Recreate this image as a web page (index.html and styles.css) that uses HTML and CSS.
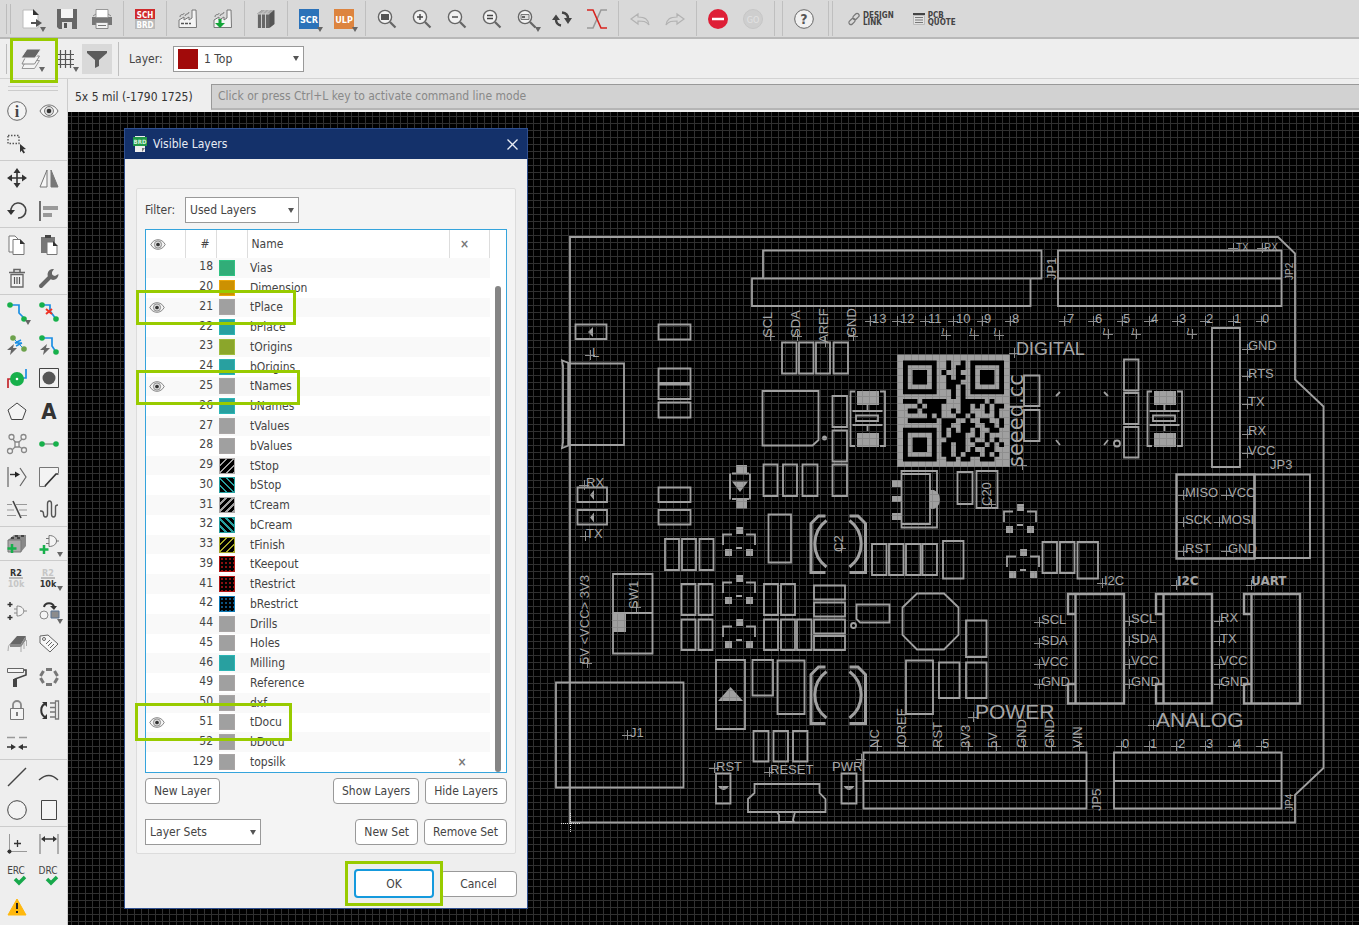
FILE: index.html
```html
<!DOCTYPE html>
<html lang="en">
<head>
<meta charset="utf-8">
<title>Board editor - Visible Layers</title>
<link rel="stylesheet" href="styles.css">
</head>
<body>
<svg class="defs" width="0" height="0" aria-hidden="true">
  <defs>
    <symbol id="eye" viewBox="0 0 20 16"><path d="M1 8C5 0 15 0 19 8C15 16 5 16 1 8Z" fill="#f6f6f6" stroke="#6a6a6a"/><circle cx="10" cy="8" r="4.5" fill="#ddd" stroke="#777"/><circle cx="10" cy="8" r="2.3" fill="#333"/></symbol>
    <symbol id="lens" viewBox="0 0 20 20"><circle cx="8" cy="8" r="6.6" fill="#f2f2f2" stroke="#666" stroke-width="1.4"/><path d="M13 13l5.500 5.500" stroke="#666" stroke-width="2.200"/></symbol>
    <symbol id="factory" viewBox="0 0 20 20"><path d="M1 18.500V11l5-3v3l5-3v3l3-2V1h4l.5 17.500z" fill="#f4f4f4" stroke="#777"/><path d="M2 8c0-4 4-1 4-4M7 7c0-3 4-1 4-4" fill="none" stroke="#777"/></symbol>
  </defs>
</svg>

<header class="toolbar" role="toolbar" aria-label="Main">
  <span class="grip"></span>
  <button class="tool drop" aria-label="Open"><svg width="20" height="20" viewBox="0 0 20 20"><path d="M1 1h10l5 5v13H1z" fill="#fff" stroke="#bbb"/><path d="M11 0l6 6h-6z" fill="#333"/><path d="M9 14h8" stroke="#555" stroke-width="2"/><path d="M14 10l6 4-6 4z" fill="#555"/></svg></button>
  <button class="tool" aria-label="Save"><svg width="20" height="20" viewBox="0 0 20 20"><path d="M0 0h20v20H2l-2-2z" fill="#666"/><path d="M4 0h12v9H4z" fill="#f4f4f4"/><path d="M5 13h10v7H5z" fill="#ddd"/><path d="M7 14h3v5H7z" fill="#555"/></svg></button>
  <button class="tool" aria-label="Print"><svg width="20" height="20" viewBox="0 0 20 20"><path d="M0 8h20v8H0z" fill="#777"/><path d="M4 .5h12v8H4z" fill="#fff" stroke="#999"/><path d="M4 13.500h12v6H4z" fill="#f2f2f2" stroke="#888"/><path d="M6 16.500h8" stroke="#777"/><path d="M1 7l3-2M19 7l-3-2" stroke="#888"/></svg></button>
  <span class="sep"></span>
  <button class="tool" aria-label="Switch to schematic"><svg width="20" height="20" viewBox="0 0 20 20"><path d="M0 0h20v10H0z" fill="#cf2a2c"/><path d="M0 10h20v10H0z" fill="#b9b9b9"/><text x="10" y="8.800" class="ic sm" fill="#fff">SCH</text><text x="10" y="18.800" class="ic sm" fill="#fff">BRD</text></svg></button>
  <span class="sep"></span>
  <button class="tool" aria-label="CAM processor"><svg width="20" height="20"><use href="#factory"/><path d="M3 14.500h10" stroke="#555" stroke-width="1.500" stroke-dasharray="3 1"/></svg></button>
  <button class="tool" aria-label="Generate CAM data"><svg width="20" height="20"><use href="#factory"/><path d="M7 10v6" stroke="#13a538" stroke-width="3"/><path d="M2 14h10l-5 5z" fill="#13a538"/></svg></button>
  <span class="sep"></span>
  <button class="tool" aria-label="Library manager"><svg width="20" height="20" viewBox="0 0 20 20"><path d="M1 5l5-4h12v14l-5 4H1z" fill="#666"/><path d="M1 5l5-4h12l-4 4z" fill="#aaa"/><path d="M1.500 5v14M5.500 5v14M9.500 5v14M5.500 5l4-4M9.500 5l4-4M1.500 5h12" fill="none" stroke="#ccc"/><path d="M13.500 5v14l5-4V1z" fill="#555"/></svg></button>
  <span class="sep"></span>
  <button class="tool drop" aria-label="Run script"><svg width="20" height="20"><path d="M0 0h20v20H0z" fill="#2b72b9"/><text x="10" y="13.500" class="ic" fill="#fff">SCR</text></svg></button>
  <button class="tool drop" aria-label="Run ULP"><svg width="20" height="20"><path d="M0 0h20v20H0z" fill="#dd843f"/><text x="10" y="13.500" class="ic" fill="#fff">ULP</text></svg></button>
  <span class="sep"></span>
  <button class="tool" aria-label="Zoom to fit"><svg width="20" height="20"><use href="#lens"/><path d="M4 5h8v6H4z" fill="#555"/></svg></button>
  <button class="tool" aria-label="Zoom in"><svg width="20" height="20"><use href="#lens"/><path d="M5 8h6M8 5v6" stroke="#444" stroke-width="1.400"/></svg></button>
  <button class="tool" aria-label="Zoom out"><svg width="20" height="20"><use href="#lens"/><path d="M5 8h6" stroke="#444" stroke-width="1.400"/></svg></button>
  <button class="tool" aria-label="Redraw"><svg width="20" height="20"><use href="#lens"/><path d="M5 6.500h6M5 9.500h6" stroke="#444" stroke-width="1.400"/></svg></button>
  <button class="tool drop" aria-label="Zoom select"><svg width="20" height="20"><use href="#lens"/><path d="M4 5.500h8v5H4z" fill="#ddd" stroke="#777"/><path d="M5 7h3v2H5z" fill="#666"/></svg></button>
  <button class="tool" aria-label="Refresh"><svg width="20" height="20" viewBox="0 0 20 20"><path d="M4 10.500c0 3 2 5.500 5 6M16 9.500c0-3-2-5.500-6-6" fill="none" stroke="#444" stroke-width="2.400"/><path d="M4 5.500l5-2.500v3zM11 14l4 2-4 2z" fill="none"/><path d="M0 11h8L4 5.500zM12 9h8l-4 6z" fill="#444"/></svg></button>
  <button class="tool" aria-label="Cross probe"><svg width="20" height="20" viewBox="0 0 20 20"><path d="M20 1h-6L6 19H0" fill="none" stroke="#999" stroke-width="1.600"/><path d="M0 1h6l8 18h6" fill="none" stroke="#d8241f" stroke-width="1.600"/></svg></button>
  <span class="sep"></span>
  <button class="tool" aria-label="Undo" disabled><svg width="20" height="20" viewBox="0 0 20 20"><path d="M1 10l7-5v3c7 0 10 2 11 8-3-4-6-4-11-4v3z" fill="none" stroke="#b2b2b2" stroke-width="1.200"/></svg></button>
  <button class="tool" aria-label="Redo" disabled><svg width="20" height="20" viewBox="0 0 20 20"><path d="M19 10l-7-5v3C5 8 2 10 1 16c3-4 6-4 11-4v3z" fill="none" stroke="#b2b2b2" stroke-width="1.200"/></svg></button>
  <span class="sep"></span>
  <button class="tool" aria-label="Stop"><svg width="20" height="20"><circle cx="10" cy="10" r="10" fill="#de1f37"/><path d="M4 10h12" stroke="#fff" stroke-width="2.500"/></svg></button>
  <button class="tool" aria-label="Go" disabled><svg width="20" height="20"><circle cx="10" cy="10" r="9.500" fill="#cecece" stroke="#c6c6c6"/><text x="10" y="13.500" class="ic thin" fill="#e2e2e2">GO</text></svg></button>
  <span class="sep"></span><span class="sep"></span>
  <button class="tool" aria-label="Help"><svg width="20" height="20"><circle cx="10" cy="10" r="9.300" fill="#f1f1f1" stroke="#666"/><text x="10" y="15" class="ic q" fill="#555">?</text></svg></button>
  <span class="sep slim"></span><span class="sep slim"></span>
  <button class="link-tool"><svg width="12" height="14" viewBox="0 0 12 14"><g fill="none" stroke="#777" stroke-width="1.200"><rect x="6" y="1" width="4" height="7" rx="2" transform="rotate(45 8 4.500)"/><rect x="2" y="6" width="4" height="7" rx="2" transform="rotate(45 4 9.500)"/></g></svg><span>DESIGN<br>LINK</span></button>
  <button class="link-tool"><svg width="12" height="14" viewBox="0 0 12 14"><path d="M0 1h12v2H0z" fill="#444"/><path d="M.5 3.500h11v9H.5z" fill="#e2e2e2" stroke="#bbb"/><path d="M2 5.500h8M2 8h8M2 10.500h8" stroke="#777"/></svg><span>PCB<br>QUOTE</span></button>
</header>

<div class="params">
  <span class="grip one"></span>
  <button class="tool drop" aria-label="Layer settings"><svg width="20" height="22" viewBox="0 0 20 22"><path d="M5 12.500h13.500l-5 8H1z" fill="#f4f4f4" stroke="#999"/><path d="M5 8h13.500l-5 8H1z" fill="#f4f4f4" stroke="#888"/><path d="M6 1h14l-6 9H0z" fill="#666" stroke="#eee"/></svg></button>
  <button class="tool drop" aria-label="Grid"><svg width="18" height="20" viewBox="0 0 18 20"><path d="M4.500 1v18M9.500 1v18M14.500 1v18M0 5.500h18M0 10.500h18M0 15.500h18" stroke="#555" stroke-width="1.200"/></svg></button>
  <button class="tool on" aria-label="Selection filter"><svg width="20" height="18" viewBox="0 0 20 18"><path d="M0 1h20v2l-8 7v6l-4 2v-8L0 3z" fill="#5c5c5c"/></svg></button>
  <span class="sep tall"></span>
  <label for="layer">Layer:</label>
  <span class="combo layer"><i class="red"></i><select id="layer"><option>1 Top</option></select></span>
</div>

<div class="work">
  <nav class="palette" aria-label="Commands">
    <span class="rail"></span>
    <div class="group">
      <button class="cmd" aria-label="Info"><svg width="20" height="20"><circle cx="10" cy="10" r="9.300" fill="#f3f3f3" stroke="#666"/><text x="10" y="15.500" class="ic serif" fill="#444">i</text></svg></button>
      <button class="cmd" aria-label="Show"><svg width="20" height="16"><use href="#eye"/></svg></button>
      <button class="cmd" aria-label="Select group"><svg width="20" height="20"><path d="M1 1.500h11v8H1z" fill="none" stroke="#555" stroke-width="1.400" stroke-dasharray="1.500 1.500"/><path d="M13 10l6 5-3 .5 2 3-1.500 1-2-3-1.500 2z" fill="#333"/></svg></button>
    </div>
    <div class="group">
      <button class="cmd" aria-label="Move"><svg width="20" height="20"><path d="M10 3v14M3 10h14" stroke="#333" stroke-width="1.600"/><path d="M10 0l3.500 5h-7zM10 20l3.500-5h-7zM0 10l5-3.500v7zM20 10l-5-3.500v7z" fill="#333"/></svg></button>
      <button class="cmd" aria-label="Mirror"><svg width="20" height="20"><path d="M8 2v17H1z" fill="#f6f6f6" stroke="#777"/><path d="M12 2v17h7z" fill="#777" stroke="#777"/></svg></button>
      <button class="cmd" aria-label="Rotate"><svg width="20" height="20"><path d="M4 11A7.500 7.500 0 1 1 11 17" fill="none" stroke="#444" stroke-width="1.600"/><path d="M0 9h8l-4 5z" fill="#333"/></svg></button>
      <button class="cmd" aria-label="Align"><svg width="20" height="20"><path d="M1 0v20" stroke="#444" stroke-width="1.500"/><path d="M4 5h15v4H4zM4 12h9v4H4z" fill="#999"/></svg></button>
    </div>
    <div class="group">
      <button class="cmd" aria-label="Copy"><svg width="20" height="20"><path d="M2 1h6l4 4v12H2z" fill="#fff" stroke="#777"/><path d="M6 4.500h7l4 4v11H6z" fill="#fff" stroke="#777"/><path d="M13 4l5 5h-5z" fill="#333"/></svg></button>
      <button class="cmd" aria-label="Paste"><svg width="20" height="20"><path d="M2 2h14v16H2z" fill="#777"/><path d="M6 0h6v3H6z" fill="#444"/><path d="M8 7h6l4 4v8.500H8z" fill="#fff" stroke="#777"/><path d="M14 6l5 5h-5z" fill="#333"/></svg></button>
      <button class="cmd" aria-label="Delete"><svg width="20" height="20"><path d="M4 6.500h12V19H4z" fill="#f4f4f4" stroke="#666" stroke-width="1.300"/><path d="M2 4.500h16M7 4V1.500h6V4" fill="none" stroke="#666" stroke-width="1.600"/><path d="M7.500 9v7M10 9v7M12.500 9v7" stroke="#555" stroke-width="1.200"/></svg></button>
      <button class="cmd" aria-label="Change"><svg width="20" height="20"><path d="M2 18L12 8" stroke="#666" stroke-width="4" stroke-linecap="round"/><path d="M15 1a5.500 5.500 0 1 0 4.500 5l-3.500 2-3-1v-3z" fill="#666"/></svg></button>
    </div>
    <div class="group">
      <button class="cmd drop" aria-label="Route"><svg width="20" height="20"><path d="M3 3h9v8l6 6" fill="none" stroke="#1b8fe3" stroke-width="1.700"/><g fill="#17b04b"><circle cx="3" cy="3" r="2.800"/><circle cx="17" cy="17" r="2.800"/></g></svg></button>
      <button class="cmd" aria-label="Ripup"><svg width="20" height="20"><path d="M3 3h8v6l6 8" fill="none" stroke="#1b8fe3" stroke-width="1.700"/><path d="M7 7l6 5M13 7l-6 5" stroke="#ee3326" stroke-width="2"/><g fill="#17b04b"><circle cx="3" cy="3" r="2.800"/><circle cx="17" cy="17" r="2.800"/></g></svg></button>
      <button class="cmd" aria-label="Quick route airwire"><svg width="20" height="20"><path d="M6 3l11 11" stroke="#1b8fe3"/><path d="M8 8l6-3M9 11l6-3M8 8l7 0" fill="none" stroke="#1b8fe3" stroke-width="1.500"/><g fill="#6da24c"><circle cx="6" cy="3" r="2.800"/><circle cx="17" cy="14" r="2.800"/></g><path d="M7 9l-7 6h4l-1 5 7-7H6z" fill="#666"/></svg></button>
      <button class="cmd" aria-label="Quick route"><svg width="20" height="20"><path d="M3 3h10v8l4 6" fill="none" stroke="#1b8fe3" stroke-width="1.700"/><g fill="#17b04b"><circle cx="3" cy="3" r="2.800"/><circle cx="17" cy="17" r="2.800"/></g><path d="M8 9l-7 6h4l-1 5 7-7H7z" fill="#666"/></svg></button>
      <button class="cmd" aria-label="Via"><svg width="20" height="20"><path d="M1 20v-9h4" fill="none" stroke="#c3262c" stroke-width="1.700"/><path d="M19 1v9h-4" fill="none" stroke="#1b8fe3" stroke-width="1.700"/><circle cx="10" cy="11" r="7" fill="#17b04b"/><circle cx="10" cy="11" r="1.300" fill="#fff"/></svg></button>
      <button class="cmd" aria-label="Pad"><svg width="20" height="20"><path d="M.5.5h19v19H.5z" fill="#f2f2f2" stroke="#444"/><circle cx="10" cy="10" r="6.500" fill="#555"/></svg></button>
      <button class="cmd" aria-label="Polygon"><svg width="20" height="20"><path d="M10 2l9 7-3.500 9.500h-11L1 9z" fill="#f4f4f4" stroke="#444"/></svg></button>
      <button class="cmd" aria-label="Text"><svg width="20" height="20"><text x="10" y="18" class="ic big" fill="#333">A</text></svg></button>
      <button class="cmd" aria-label="Ratsnest"><svg width="20" height="20"><path d="M5 4l5 6 6-6M4 17l6-6 7 5" fill="none" stroke="#888" stroke-width="1.200"/><g fill="#f4f4f4" stroke="#888" stroke-width="1.300"><circle cx="4.500" cy="3" r="2.500"/><circle cx="16.500" cy="3" r="2.500"/><circle cx="3" cy="17" r="2.500"/><circle cx="17" cy="16" r="2.500"/><path d="M8 8h4v5H8z"/></g></svg></button>
      <button class="cmd" aria-label="Signal"><svg width="20" height="20"><path d="M3 10h14" stroke="#999" stroke-width="1.500"/><g fill="#17b04b"><circle cx="3" cy="10" r="2.800"/><circle cx="17" cy="10" r="2.800"/></g></svg></button>
      <button class="cmd" aria-label="Split"><svg width="20" height="20"><path d="M1 0v20M13 1l6 9-6 9" fill="none" stroke="#666" stroke-width="1.200"/><path d="M3 7.500h6" stroke="#333" stroke-width="1.400"/><path d="M8 4.500l5 3-5 3z" fill="#222"/></svg></button>
      <button class="cmd" aria-label="Miter"><svg width="20" height="20"><path d="M.5 19.500V.5h19V6M.5 19.500H7" fill="#f3f3f3" stroke="#777"/><path d="M6 19L17 7h2.500" fill="none" stroke="#333" stroke-width="1.700"/></svg></button>
      <button class="cmd" aria-label="Slice"><svg width="20" height="20"><path d="M0 4.500h5M9 4.500h11M0 10h7M12 10h8M0 15.500h9M14 15.500h6" stroke="#999"/><path d="M6 1l8 17" stroke="#444" stroke-width="1.600"/></svg></button>
      <button class="cmd" aria-label="Meander"><svg width="20" height="20"><path d="M1 11h1q2.500 0 2.500 3t2 3 2-3V4q0-3 2-3t2 3v10q0 3 2 3t2-3V7q0-2 2.500-2" fill="none" stroke="#555" stroke-width="1.400"/></svg></button>
    </div>
    <div class="group">
      <button class="cmd" aria-label="Add part"><svg width="20" height="20"><path d="M1 6l6-5h12v11l-5 6H1z" fill="#888"/><path d="M1 6h13v12H1z" fill="#aaa" stroke="#777"/><path d="M4 4h3M10 4h3M8 2h3M14 2h3" stroke="#444" stroke-width="2"/><path d="M5 10v9M.5 14.500h9" stroke="#17b04b" stroke-width="2.500"/></svg></button>
      <button class="cmd drop" aria-label="Add gate"><svg width="20" height="20"><path d="M10 1.500v11c10 0 10-11 0-11zM7 4.500h3M7 9.500h3M17 7h3" fill="#f4f4f4" stroke="#777"/><path d="M5 11v9M.5 15.500h9" stroke="#17b04b" stroke-width="2.500"/></svg></button>
    </div>
    <div class="group">
      <button class="cmd" aria-label="Name"><svg width="20" height="20"><text x="9" y="8" class="ic" fill="#333">R2</text><path d="M2 10h14" stroke="#888"/><text x="9" y="19" class="ic" fill="#c6c6c6">10k</text></svg></button>
      <button class="cmd drop" aria-label="Value"><svg width="20" height="20"><text x="9" y="8" class="ic" fill="#c6c6c6">R2</text><path d="M2 10h14" stroke="#888"/><text x="9" y="19" class="ic" fill="#333">10k</text></svg></button>
      <button class="cmd" aria-label="Invoke"><svg width="20" height="20"><path d="M3 1v5M.5 3.500h5M3 14v5M.5 16.500h5" stroke="#333" stroke-width="1.500"/><path d="M10 5v10c9 0 9-10 0-10zM7 8h3M7 12h3M17 10h3" fill="#f4f4f4" stroke="#888"/></svg></button>
      <button class="cmd drop" aria-label="Replace"><svg width="20" height="20"><path d="M5 6c1-5 9-5 10 0" fill="none" stroke="#333" stroke-width="2"/><path d="M11 5h7l-3 4z" fill="#333"/><circle cx="5" cy="14" r="4" fill="#f4f4f4" stroke="#888"/><path d="M12 10h8v7h-8z" fill="#8c8c8c" stroke="#597391"/></svg></button>
      <button class="cmd" aria-label="Package"><svg width="20" height="20"><path d="M10 2h9l-5 8H3z" fill="#666"/><path d="M3 10h11l5-8v4l-5 7H3z" fill="#888"/><path d="M3 10q-2 1-2 7M14 12v6M17 9v6M19.500 6v6" fill="none" stroke="#aaa"/></svg></button>
      <button class="cmd" aria-label="Attribute"><svg width="20" height="20"><path d="M1 2l8-1 10 9-8 8L1 9z" fill="#f6f6f6" stroke="#666"/><circle cx="5" cy="5" r="1.500" fill="none" stroke="#666"/><path d="M7 10l4-4M9 12l4-4M11 14l4-4" stroke="#666"/></svg></button>
      <button class="cmd" aria-label="Paint"><svg width="20" height="20"><path d="M.5 1.500h16v4H.5z" fill="#f6f6f6" stroke="#666"/><path d="M17 3h2v5l-11 4v3" fill="none" stroke="#444" stroke-width="1.600"/><path d="M6 12h4v8H6z" fill="#444"/></svg></button>
      <button class="cmd" aria-label="Arrange"><svg width="20" height="20"><g fill="#777"><path d="M7 1h6v3H7zM7 16h6v3H7z"/><path d="M-3-1.500h6v3h-6z" transform="translate(3 6.500) rotate(-60)"/><path d="M-3-1.500h6v3h-6z" transform="translate(17 6.500) rotate(60)"/><path d="M-3-1.500h6v3h-6z" transform="translate(3 13.500) rotate(60)"/><path d="M-3-1.500h6v3h-6z" transform="translate(17 13.500) rotate(-60)"/></g></svg></button>
      <button class="cmd" aria-label="Lock"><svg width="20" height="20"><path d="M6 9V5a4 4 0 0 1 8 0v4" fill="none" stroke="#888" stroke-width="1.800"/><path d="M3.500 8.500h13v11h-13z" fill="#f4f4f4" stroke="#777"/><path d="M10 12v4" stroke="#555" stroke-width="1.500"/></svg></button>
      <button class="cmd" aria-label="Gate swap"><svg width="20" height="20"><path d="M6 4C1 6 1 14 6 17" fill="none" stroke="#333" stroke-width="2"/><path d="M3 2h5v5zM3 19h5v-5z" fill="#333"/><path d="M16.500 1h3v18h-3zM11 3h5M11 7.500h5M11 12h5M11 17h5" fill="#f4f4f4" stroke="#777" stroke-width="1.300"/></svg></button>
      <button class="cmd" aria-label="Optimize"><svg width="20" height="20"><path d="M0 4.500h8M12 4.500h8" stroke="#999" stroke-width="1.500"/><path d="M0 14h5M15 14h5" stroke="#333" stroke-width="1.500"/><path d="M4 11l5 3-5 3zM16 11l-5 3 5 3z" fill="#333"/></svg></button>
    </div>
    <div class="group">
      <button class="cmd" aria-label="Line"><svg width="20" height="20"><path d="M1 19L19 1" stroke="#444" stroke-width="1.400"/></svg></button>
      <button class="cmd" aria-label="Arc"><svg width="20" height="20"><path d="M0 13q10-9 19 0" fill="none" stroke="#444" stroke-width="1.400"/></svg></button>
      <button class="cmd" aria-label="Circle"><svg width="20" height="20"><circle cx="10" cy="10" r="9.300" fill="#f3f3f3" stroke="#444"/></svg></button>
      <button class="cmd" aria-label="Rectangle"><svg width="20" height="20"><path d="M2.500.5h15v19h-15z" fill="#f3f3f3" stroke="#444"/></svg></button>
    </div>
    <div class="group">
      <button class="cmd" aria-label="Mark"><svg width="20" height="20"><path d="M2.500 0v20M0 17.500h20" stroke="#999"/><path d="M10.500 6v7M7 9.500h7" stroke="#333" stroke-width="1.300"/><circle cx="2.500" cy="17.500" r="2" fill="#333"/></svg></button>
      <button class="cmd" aria-label="Dimension"><svg width="20" height="20"><path d="M1 0v20M19 0v20" stroke="#999" stroke-width="1.500"/><path d="M4 5h12" stroke="#333" stroke-width="1.500"/><path d="M2 5l4-3v6zM18 5l-4-3v6z" fill="#333"/></svg></button>
      <button class="cmd" aria-label="Electrical rule check"><svg width="20" height="22"><text x="9" y="9" class="ic thin wide" fill="#444">ERC</text><path d="M8 14l4 4 6-6" fill="none" stroke="#17a84b" stroke-width="3.500"/></svg></button>
      <button class="cmd" aria-label="Design rule check"><svg width="20" height="22"><text x="9" y="9" class="ic thin wide" fill="#444">DRC</text><path d="M8 14l4 4 6-6" fill="none" stroke="#17a84b" stroke-width="3.500"/></svg></button>
      <button class="cmd" aria-label="Errors"><svg width="20" height="20"><path d="M10 2l9 16H1z" fill="#ffb80d" stroke="#ffb80d" stroke-linejoin="round"/><path d="M10 6v6M10 14v2" stroke="#222" stroke-width="2"/></svg></button>
    </div>
  </nav>

  <main class="editor">
    <div class="command">
      <output>5x 5 mil (-1790 1725)</output>
      <input type="text" aria-label="Command line" placeholder="Click or press Ctrl+L key to activate command line mode">
    </div>
    <div class="canvas">
      <svg class="board" width="1291" height="813" viewBox="68 112 1291 813" role="img" aria-label="Board layout">
        <defs>
          <pattern id="pad" width="7" height="7" x="1" y="4" patternUnits="userSpaceOnUse"><path d="M0 0h7v7H0z" fill="#a0a0a0"/><path d="M.5 0v7M0 .5h7" stroke="#8e8e8e"/></pattern>
          <marker id="cross" markerUnits="userSpaceOnUse" markerWidth="12" markerHeight="12" refX="6" refY="6"><path d="M1 6.500h10M6.500 1v10" stroke="#8d8d8d"/></marker>
          <g id="crystal"><path class="s" d="M855 391.500h-4.500v54.500h4.500M880 391.500h5V446h-5M852.500 411h30M852.500 425h30M867.500 405v6M867.500 425v6M856 415.500h22v5.500h-22z"/><path class="f" d="M857 391h22v14h-22zM857 433h22v14h-22z"/></g>
          <g id="sot"><path class="f" d="M736 527h7v7h-7zM725 549h7v7h-7zM746 549h7v7h-7z"/><path class="s" d="M723 545v-10.500h9M746 534.500h9V545M736 548h6"/></g>
          <g id="cap"><path class="s thick" d="M825.500 516h-7l-7.500 7.500v49h14.500M849.500 516h8.500l7.500 7.500v49h-16M826.500 520.500A29 29 0 0 0 826.500 567M849.500 520.500A29 29 0 0 1 849.500 567"/></g>
          <g id="conn"><path class="s two" d="M1075.500 594h48.500v109.500h-48.500zM1075 594h-7v20h7M1075 684h-7v19.500h7"/></g>
        </defs>
        <path class="s" d="M570 237h708l17 16.500v126l28.500 27V768L1295 795v27.500H570z"/>
        <path class="s" d="M763 250.500h278.500v28H763zM752 278.500h278.500V306H752zM1058 250.500h223.500V306H1058zM1058 278.500h223.500M863.500 752.500h223v56h-223zM863.500 781h223M1114 752.500h167.500v56H1114zM1114 781h167.500"/>
        <!-- chip resistors and capacitors -->
        <path class="s" d="M575.500 324.500h31V339h-31zM658.500 324.500h32v15h-32zM658.500 368.500h32V383h-32zM658.500 384.500h32V399h-32zM658.500 402.500h32v15h-32zM782 342.500h14.500v31H782zM799 342.500h14.500v31H799zM816 342.500h14v31h-14zM833.500 342.500H848v31h-14.500zM832.500 396H847v31h-14.500zM832.500 430.500H847v31h-14.500zM832.500 464.500H847V496h-14.500zM763.500 464.500h14V496h-14zM783 464.500h14V496h-14zM802.500 464.500h15V496h-15zM577.500 487.500H607V502h-29.500zM577.500 510H607v14.500h-29.500zM658.500 487.500h32V502h-32zM658.500 510h32v14.500h-32zM768.500 514.500H791v48h-22.500zM665 539h14v31h-14zM682 539h14v31h-14zM699.500 539h14v31h-14z"/>
        <path class="s" d="M957.500 472h15v32h-15zM976.500 471h21v37h-21zM1024 375.500h15.500V406H1024zM1024 410h15.500v31H1024zM1124 359.500h14.500v31H1124zM1124 393h14.500v31H1124zM1124 427h14.500v30.500H1124zM872 544h14.500v31H872zM889 544h14.500v31H889zM906 544h14.500v31H906zM922.500 544H937v31h-14.500zM943 541h20.500v37.500H943zM1042.500 542h14.500v31h-14.500zM1060 542h14.500v31H1060zM1077.500 542H1098v36.500h-20.500zM1212 328h28v139h-28z"/>
        <path class="s" d="M681.500 584h14v31h-14zM698.500 584h14v31h-14zM681.500 619.500h14V650h-14zM698.500 619.500h14V650h-14zM764 584h14v31h-14zM781 584h14v31h-14zM764 619.500h14V650h-14zM781 619.500h14V650h-14zM797 619.500h14.500V650H797zM814 585.500h31v14h-31zM814 602.500h31v14h-31zM814 619.500h31v14h-31zM814 636h31v14h-31zM856.500 604.500H889.500v18H860l-3.500-3.500zM716 660h29v69h-29zM752.500 660h20.500v35.500h-20.500zM777.500 660.500h27V714h-27zM906 660.500h27V714h-27zM939 662.500h20.500V698H939zM966 662.500h20.500V698H966zM966 620.500h20.500V657H966zM753.500 731h15v30.500h-15zM773.500 731H788v30.500h-14.500zM793 731h14.500v30.500H793zM716 773.500h14.500v30H716zM841.500 773.500h15v30h-15z"/>
        <!-- connectors, switches and ICs -->
        <path class="s" d="M570 363.500h54V445h-54M563 365v78M570 363.500l-8-3 1 6M570 445l-8 3 1-6M762.500 391h56v49l-6 5.500h-50zM556 682.500h127.500v105H556zM613 574h39.500v79.500H613zM613 613h39.500M917 593.500h27l14.500 14V635L944 649.500h-27L902.500 635v-27.500zM754.500 784h65v9l6 6v13H748v-13l6.500-6zM777 812l2 3v7h15l-1-2 2-8M901.500 471H937v56.500h-35.500zM901.500 474H930v50h-28.500zM730 473.500v26M750 473.500v26M732 473.500h4M746 473.500h3M732 499h17M1056 396l4-4M1104 392l4 4M1056 440l4 5M1104 445l4-5"/>
        <path class="s two" d="M1176.500 474.500h78v84h-78zM568.500 363v82"/>
        <path class="s" d="M1254.500 474.500h55.500V558h-55.500z"/>
        <circle class="s" cx="1117" cy="443.500" r="3"/><circle class="s" cx="853.500" cy="625.500" r="2.500"/><circle class="f" cx="824.500" cy="438" r="2.500"/>
        <path class="f" d="M736 465h11v9.500h-11zM736 498.500h11v10h-11zM732 481.500h16l-8 10.500zM588 332l5-5v10zM590 495l4-5v10zM590 517.500l4-5v10zM892 480h10v7h-10zM892 496h10v6h-10zM892 513h10v7h-10zM930 490h4q6 3 6 9.500t-6 9.500h-4zM613 614h13v18h-13zM718 701h25l-12.500-14zM718 786h11q-5.500 8-11 0zM843.500 786h11q-5.500 8-11 0z"/>
        <use href="#crystal"/><use href="#crystal" x="297"/>
        <use href="#sot"/><use href="#sot" x="281" y="-23"/><use href="#sot" x="284" y="22"/><use href="#sot" y="48"/><use href="#sot" y="92"/>
        <use href="#cap"/><use href="#cap" y="151"/>
        <use href="#conn"/><use href="#conn" x="88"/><use href="#conn" x="176"/>
        <!-- QR code, one unit per module -->
        <path class="f" d="M897 354.500h113V467H897z"/>
        <g transform="translate(903 360.500) scale(4.810)">
          <path fill="#000" fill-rule="evenodd" d="M0 0h7v7H0zM1 1v5h5V1zM2 2h3v3H2zM14 0h7v7h-7zM15 1v5h5V1zM16 2h3v3h-3zM0 14h7v7H0zM1 15v5h5v-5zM2 16h3v3H2z"/>
          <path fill="#000" d="M9 0h1v1H9zM12 0h1v1h-1zM9 1h1v1H9zM11 1h2v1h-2zM8 2h1v1H8zM11 2h1v3h-1zM9 3h1v2H9zM12 3h1v1h-1zM10 4h1v1h-1zM9 5h2v1H9zM12 5h1v1h-1zM10 6h1v1h-1zM12 6h1v1h-1zM0 8h3v1H0zM4 8h5v1H4zM10 7h1v1h-1zM12 7h1v2h-1zM3 9h1v1H3zM5 9h3v1H5zM13 8h4v1h-4zM18 8h1v1h-1zM1 10h2v1H1zM4 10h4v1H4zM12 9h2v2h-2zM15 9h1v1h-1zM17 9h1v2h-1zM19 9h2v1h-2zM5 11h1v1H5zM7 11h1v1H7zM10 10h1v1h-1zM11 11h2v1h-2zM14 11h1v1h-1zM19 10h1v2h-1zM1 12h6v1H1zM8 12h3v1H8zM13 12h1v1h-1zM16 12h2v1h-2zM8 13h2v1H8zM12 13h3v1h-3zM17 13h2v1h-2zM20 12h1v2h-1zM8 14h1v2H8zM10 14h1v1h-1zM12 14h2v1h-2zM15 14h1v2h-1zM18 14h2v1h-2zM10 15h3v1h-3zM17 15h1v2h-1zM9 16h4v1H9zM14 16h1v1h-1zM19 16h1v1h-1zM8 17h2v1H8zM11 17h2v2h-2zM15 17h2v1h-2zM18 17h1v1h-1zM20 17h1v1h-1zM8 18h2v2H8zM14 18h1v1h-1zM17 18h2v1h-2zM11 19h1v1h-1zM13 19h3v1h-3zM17 19h1v1h-1zM19 19h1v1h-1zM9 20h2v1H9zM12 20h2v1h-2zM16 20h3v1h-3z"/>
        </g>
        <polyline class="crosses" points="1233,248 1262,248 590,355 770,336 797,336 825,342 853,336 584,485 585,536 841,548 991,504 1014,353 870,321 897,321 925,321 953,321 982,321 1010,321 946,335 974,335 999,335 1108,334 1136,334 1192,334 1064,321 1093,321 1122,321 1149,321 1177,321 1205,321 1233,321 1261,321 1247,349 1247,376 1247,404 1247,434 1247,453 1183,495 1226,495 1183,522 1219,522 1183,551 1226,551 1102,583 1176,585 1251,585 1039,622 1039,643 1039,664 1039,684 1129,621 1129,641 1129,664 1129,684 1219,621 1219,641 1219,664 1219,684 973,717 1153,725 877,746 904,746 939,746 968,746 996,746 1023,746 1051,746 1079,746 1121,746 1149,746 1176,746 1205,746 1233,746 1261,746 627,735 636,607 587,663 714,768 769,772 861,759 1022,465"/>
        <g class="t">
          <text x="872" y="323">13</text><text x="900" y="323">12</text><text x="928" y="323">11</text><text x="956" y="323">10</text><text x="984" y="323">9</text><text x="1012" y="323">8</text>
          <text x="1067" y="323">7</text><text x="1095" y="323">6</text><text x="1123" y="323">5</text><text x="1151" y="323">4</text><text x="1179" y="323">3</text><text x="1206" y="323">2</text><text x="1234" y="323">1</text><text x="1262" y="323">0</text>
          <text x="592" y="357">L</text><text x="586" y="487">RX</text><text x="586" y="538">TX</text>
          <text x="1248" y="350">GND</text><text x="1248" y="378">RTS</text><text x="1248" y="406">TX</text><text x="1248" y="435">RX</text><text x="1248" y="455">VCC</text><text x="1270" y="469">JP3</text>
          <text x="1185" y="497">MISO</text><text x="1185" y="524">SCK</text><text x="1185" y="553">RST</text><text x="1228" y="497">VCC</text><text x="1221" y="524">MOSI</text><text x="1228" y="553">GND</text>
          <text x="1104" y="585">I2C</text><text class="w" x="1177" y="585">I2C</text><text class="w" x="1251" y="585">UART</text>
          <text x="1041" y="624">SCL</text><text x="1041" y="645">SDA</text><text x="1041" y="666">VCC</text><text x="1041" y="686">GND</text>
          <text x="1131" y="623">SCL</text><text x="1131" y="643">SDA</text><text x="1131" y="665">VCC</text><text x="1131" y="686">GND</text>
          <text x="1220" y="622">RX</text><text x="1220" y="643">TX</text><text x="1220" y="665">VCC</text><text x="1220" y="686">GND</text>
          <text x="1122" y="748">0</text><text x="1150" y="748">1</text><text x="1178" y="748">2</text><text x="1206" y="748">3</text><text x="1234" y="748">4</text><text x="1262" y="748">5</text>
          <text x="630" y="737">J1</text><text x="716" y="771">RST</text><text x="770" y="774">RESET</text><text x="832" y="771">PWR</text>
          <text class="xs" x="1236" y="251">TX</text><text class="xs" x="1264" y="251">RX</text>
          <text class="m" x="1016" y="355">DIGITAL</text><text class="l" x="975" y="719">POWER</text><text class="l" x="1156" y="727">ANALOG</text>
          <text transform="translate(772 337) rotate(-90)">SCL</text><text transform="translate(800 337) rotate(-90)">SDA</text><text transform="translate(828 343) rotate(-90)">AREF</text><text transform="translate(856 337) rotate(-90)">GND</text>
          <text transform="translate(1056 280) rotate(-90)">JP1</text><text class="xs" transform="translate(1293 280) rotate(-90)">JP2</text>
          <text transform="translate(843 552) rotate(-90)">C2</text><text transform="translate(991 506) rotate(-90)">C20</text>
          <text class="qr" transform="translate(1023 467) rotate(-90)">seeed.cc</text>
          <text transform="translate(638 609) rotate(-90)">SW1</text><text transform="translate(589 664) rotate(-90)">5V &lt;VCC&gt; 3V3</text>
          <text transform="translate(879 748) rotate(-90)">NC</text><text transform="translate(906 748) rotate(-90)">IOREF</text><text transform="translate(942 748) rotate(-90)">RST</text><text transform="translate(970 748) rotate(-90)">3V3</text><text transform="translate(997 748) rotate(-90)">5V</text><text transform="translate(1026 748) rotate(-90)">GND</text><text transform="translate(1054 748) rotate(-90)">GND</text><text transform="translate(1082 748) rotate(-90)">VIN</text>
          <text transform="translate(1101 811) rotate(-90)">JP5</text><text class="xs" transform="translate(1293 811) rotate(-90)">JP4</text>
          <text transform="translate(947 335) rotate(-90)">~</text><text transform="translate(975 335) rotate(-90)">~</text><text transform="translate(999 335) rotate(-90)">~</text><text transform="translate(1108 335) rotate(-90)">~</text><text transform="translate(1137 335) rotate(-90)">~</text><text transform="translate(1192 335) rotate(-90)">~</text>
        </g>
        <path d="M561 823.500h20M570.500 813v20" stroke="#ddd" stroke-dasharray="1 1"/>
      </svg>
    </div>
  </main>
</div>

<section class="dialog" role="dialog" aria-labelledby="dlg-title">
  <header class="title">
    <svg width="14" height="16" viewBox="0 0 14 16"><path d="M2 0h10v16H2z" fill="#eee"/><path d="M9 16l3-4H9z" fill="#777"/><path d="M0 1h14v9H0z" fill="#229a4a"/><text x="7" y="8" class="ic xs" fill="#d8f0df">BRD</text></svg>
    <h1 id="dlg-title">Visible Layers</h1>
    <button class="close" aria-label="Close"><svg width="11" height="11"><path d="M.5.5l10 10M10.500.5l-10 10" stroke="#e8ecf4" stroke-width="1.300"/></svg></button>
  </header>
  <div class="pane">
    <div class="row">
      <label for="filter">Filter:</label>
      <span class="combo filter"><select id="filter"><option>Used Layers</option></select></span>
    </div>
    <div class="list">
      <table>
        <colgroup><col class="c-eye"><col class="c-num"><col class="c-sw"><col><col class="c-x"></colgroup>
        <thead><tr><th aria-label="Visible"><svg width="16" height="13"><use href="#eye"/></svg></th><th class="n">#</th><th aria-label="Colour"></th><th class="name">Name</th><th class="x">×</th></tr></thead>
        <tbody>
          <tr><td></td><td>18</td><td><i class="vias"></i></td><td>Vias</td><td></td></tr>
          <tr><td></td><td>20</td><td><i class="dim"></i></td><td>Dimension</td><td></td></tr>
          <tr><td><svg width="16" height="13"><use href="#eye"/></svg></td><td>21</td><td><i></i></td><td>tPlace</td><td></td></tr>
          <tr><td></td><td>22</td><td><i class="teal"></i></td><td>bPlace</td><td></td></tr>
          <tr><td></td><td>23</td><td><i class="olive"></i></td><td>tOrigins</td><td></td></tr>
          <tr><td></td><td>24</td><td><i class="teal"></i></td><td>bOrigins</td><td></td></tr>
          <tr><td><svg width="16" height="13"><use href="#eye"/></svg></td><td>25</td><td><i></i></td><td>tNames</td><td></td></tr>
          <tr><td></td><td>26</td><td><i class="teal"></i></td><td>bNames</td><td></td></tr>
          <tr><td></td><td>27</td><td><i></i></td><td>tValues</td><td></td></tr>
          <tr><td></td><td>28</td><td><i></i></td><td>bValues</td><td></td></tr>
          <tr><td></td><td>29</td><td><i class="h up"></i></td><td>tStop</td><td></td></tr>
          <tr><td></td><td>30</td><td><i class="h down"></i></td><td>bStop</td><td></td></tr>
          <tr><td></td><td>31</td><td><i class="h up bold"></i></td><td>tCream</td><td></td></tr>
          <tr><td></td><td>32</td><td><i class="h down bold"></i></td><td>bCream</td><td></td></tr>
          <tr><td></td><td>33</td><td><i class="h up yellow"></i></td><td>tFinish</td><td></td></tr>
          <tr><td></td><td>39</td><td><i class="dots"></i></td><td>tKeepout</td><td></td></tr>
          <tr><td></td><td>41</td><td><i class="dots"></i></td><td>tRestrict</td><td></td></tr>
          <tr><td></td><td>42</td><td><i class="dots blue"></i></td><td>bRestrict</td><td></td></tr>
          <tr><td></td><td>44</td><td><i></i></td><td>Drills</td><td></td></tr>
          <tr><td></td><td>45</td><td><i></i></td><td>Holes</td><td></td></tr>
          <tr><td></td><td>46</td><td><i class="teal"></i></td><td>Milling</td><td></td></tr>
          <tr><td></td><td>49</td><td><i></i></td><td>Reference</td><td></td></tr>
          <tr><td></td><td>50</td><td><i></i></td><td>dxf</td><td></td></tr>
          <tr><td><svg width="16" height="13"><use href="#eye"/></svg></td><td>51</td><td><i></i></td><td>tDocu</td><td></td></tr>
          <tr><td></td><td>52</td><td><i></i></td><td>bDocu</td><td></td></tr>
          <tr><td></td><td>129</td><td><i></i></td><td>topsilk</td><td>×</td></tr>
        </tbody>
      </table>
      <div class="track"><div class="thumb"></div></div>
    </div>
    <div class="row after">
      <button class="btn">New Layer</button>
      <button class="btn push">Show Layers</button>
      <button class="btn">Hide Layers</button>
    </div>
    <div class="row sets">
      <span class="combo sets-combo"><select aria-label="Layer sets"><option>Layer Sets</option></select></span>
      <button class="btn push">New Set</button>
      <button class="btn">Remove Set</button>
    </div>
  </div>
  <footer class="actions">
    <button class="btn ok">OK</button>
    <button class="btn cancel">Cancel</button>
  </footer>
</section>

<div class="mark m-layers"></div>
<div class="mark m-place"></div>
<div class="mark m-names"></div>
<div class="mark m-docu"></div>
<div class="mark m-ok"></div>
</body>
</html>
```

FILE: styles.css
```css
* { box-sizing: border-box; }

body {
  margin: 0;
  min-height: 100vh;
  display: flex;
  flex-direction: column;
  position: relative;
  overflow: hidden;
  background: #eee;
  color: #444;
  font: 12px/16px "DejaVu Sans Condensed", "Open Sans", sans-serif;
}

button, select, input { font: inherit; color: inherit; margin: 0; }
button { padding: 0; border: 0; background: none; }
svg { display: block; }
.defs { position: absolute; }

/* icon lettering */
.ic { font: bold 9px "DejaVu Sans Condensed", "Liberation Sans", sans-serif; text-anchor: middle; }
.ic.sm { font-size: 8px; }
.ic.xs { font-size: 6px; }
.ic.q { font-size: 14px; }
.ic.thin { font-weight: normal; }
.ic.wide { font-size: 10px; }
.ic.big { font-size: 22px; }
.ic.serif { font: bold 16px "Liberation Serif", serif; }

/* top toolbar */
.toolbar {
  display: flex;
  align-items: center;
  height: 39px;
  padding-left: 6px;
  background: #d9d9d9;
  border-bottom: 2px solid #b8b8b8;
}
.grip { width: 5px; height: 30px; margin-right: 3px; border: solid #bcbcbc; border-width: 0 1px; }
.grip.one { border-right: 0; }
.tool {
  position: relative;
  display: flex;
  align-items: center;
  justify-content: center;
  width: 35px;
  height: 35px;
  flex: none;
}
.drop { position: relative; }
.drop::after {
  content: "";
  position: absolute;
  right: 3px;
  bottom: 4px;
  border: solid transparent;
  border-width: 5px 3px 0;
  border-top-color: #666;
}
.sep { width: 8px; height: 35px; flex: none; display: flex; justify-content: center; }
.sep::before { content: ""; width: 1px; background: #bfbfbf; }
.sep.slim { width: 4px; }
.tool + .sep.slim { margin-left: 5px; }
.link-tool {
  display: flex;
  align-items: center;
  gap: 3px;
  margin-left: 14px;
  text-align: left;
  font: bold 8px/7px "DejaVu Sans Condensed", sans-serif;
}
.link-tool + .link-tool { margin-left: 19px; }

/* parameter bar */
.params {
  display: flex;
  align-items: center;
  height: 40px;
  padding-left: 6px;
  border-bottom: 1px solid #d2d2d2;
}
.params .tool { width: 34px; }
.params .tool.on { width: 30px; height: 30px; background: #d9d9d9; }
.params .sep.tall { width: 12px; height: 34px; }
.params label { width: 39px; margin: 0 5px; }
.combo {
  display: flex;
  align-items: center;
  height: 26px;
  padding: 2px 4px;
  background: #fff;
  border: 1px solid #999;
}
.combo select {
  flex: 1;
  min-width: 0;
  border: 0;
  padding: 0;
  background: none;
  appearance: none;
}
.combo::after { content: ""; border: solid transparent; border-width: 5px 3px 0; border-top-color: #555; }
.combo.layer { width: 131px; }
.red { width: 20px; height: 20px; margin-right: 6px; background: #a10a0a; }

/* workspace */
.work { flex: 1; display: flex; }
.palette { width: 68px; flex: none; border-right: 1px solid #ccc; padding-top: 7px; }
.rail { display: block; height: 5px; margin: 0 9px 3px 8px; border: solid #ccc; border-width: 1px 0; }
.group { display: grid; grid-template-columns: 32px 32px; grid-auto-rows: 33px; padding-left: 1px; }
.group + .group { border-top: 1px solid #ccc; }
.group:last-child { grid-template-rows: 33px 31px 32px; }
.cmd { display: flex; align-items: center; justify-content: center; }
.cmd svg { overflow: visible; }
.cmd.drop::after { right: 2px; bottom: 3px; }

.editor { flex: 1; min-width: 0; display: flex; flex-direction: column; }
.command { display: flex; align-items: center; height: 33px; padding: 2px 0 0 7px; }
.command output { width: 136px; color: #333; white-space: nowrap; }
.command input {
  flex: 1;
  height: 26px;
  padding: 0 6px;
  border: 1px solid #999;
  border-bottom: 2px solid #b5b5b5;
  border-right: 0;
  background: #d2d2d2;
}
.command input::placeholder { color: #888; opacity: 1; }
.canvas {
  flex: 1;
  overflow: hidden;
  background-color: #000;
  background-image: linear-gradient(90deg, #303030 1px, transparent 1px), linear-gradient(#303030 1px, transparent 1px);
  background-size: 7px 7px;
  background-position: 3px 4px;
  height: 0;
}

/* board drawing */
.s { fill: none; stroke: #a0a0a0; stroke-width: 1.8; }
.s.two { stroke-width: 2.4; }
.s.thick { stroke-width: 3; }
.f { fill: url(#pad); }
.t { fill: #a6a6a6; font: 13px "Liberation Sans", Arial, sans-serif; }
.t .xs { font-size: 10px; }
.t .m { font-size: 18px; }
.t .l { font-size: 21px; }
.t .w { font: bold 12px "DejaVu Sans", sans-serif; }
.t .qr { font: 21px "DejaVu Sans", sans-serif; }
.crosses { fill: none; stroke: none; marker: url(#cross); }

/* layer dialog */
.dialog {
  position: absolute;
  left: 124px;
  top: 128px;
  width: 404px;
  background: #eee;
  border: 1px solid #2f4f8f;
}
.title {
  display: flex;
  align-items: center;
  height: 30px;
  padding: 0 9px 0 8px;
  background: #14316a;
  color: #e8ecf4;
}
.title h1 { flex: 1; margin: 0 0 0 6px; font-size: 12px; font-weight: normal; }
.pane {
  margin: 29px 11px 0;
  padding: 8px;
  background: #f4f4f4;
  border: 1px solid #dcdcdc;
  border-radius: 2px;
}
.row { display: flex; align-items: center; gap: 6px; }
.row label { width: 34px; white-space: nowrap; }
.combo.filter { width: 114px; }
.list {
  display: flex;
  height: 544px;
  margin-top: 6px;
  background: #fff;
  border: 1px solid #35a4dc;
}
table { width: 344px; height: 542px; border-collapse: collapse; table-layout: fixed; }
.c-eye { width: 39px; }
.c-num { width: 31px; }
.c-sw { width: 31px; }
.c-x { width: 40px; }
th { height: 28px; padding: 0; font-weight: normal; border-right: 1px solid #ddd; text-align: left; }
th svg { margin-left: 4px; }
th.n { padding-left: 15px; }
th.name { padding-left: 4px; }
th.x { font-weight: bold; padding-left: 10px; color: #777; }
td { padding: 0; line-height: 16px; }
td svg { margin-left: 3px; }
td:nth-child(2) { text-align: right; padding: 0 3px 3px 0; }
td:nth-child(3) { padding-left: 3px; }
td:nth-child(4) { padding-left: 3px; }
td:last-child { padding-left: 8px; font-weight: bold; color: #777; }
tbody tr:nth-child(odd) { background: #f9f9f9; }
td i { display: block; width: 16px; height: 16px; background: #a0a0a0; border: 1px solid #a9a5a5; }
.vias { background: #31ad78; border-color: #2fc283; }
.dim { background: #cc9102; border-color: #eba70a; }
.teal { background: #28a0a0; border-color: #2cb5b5; }
.olive { background: #8ba62b; border-color: #a0bd3c; }
.h.up { background: repeating-linear-gradient(135deg, #000 0 4px, #a0a0a0 4px 5px); }
.h.down { border-color: #28a0a0; background: repeating-linear-gradient(45deg, #000 0 4px, #28a0a0 4px 5px); }
.h.up.bold { background: repeating-linear-gradient(135deg, #000 0 3px, #a0a0a0 3px 5px); }
.h.down.bold { background: repeating-linear-gradient(45deg, #000 0 3px, #28a0a0 3px 5px); }
.h.up.yellow { border-color: #a5a52a; background: repeating-linear-gradient(135deg, #000 0 4px, #a5a52a 4px 5px); }
.dots { border-color: #b01414; background: radial-gradient(#8a1010 1px, #000 1px) 0 0 / 4px 4px; }
.dots.blue { border-color: #0e78b4; background: radial-gradient(#0b5580 1px, #000 1px) 0 0 / 4px 4px; }
.track { flex: 1; padding: 56px 5px 0; display: flex; }
.thumb { width: 6px; background: #858585; border-radius: 3px; }
.btn {
  height: 26px;
  padding: 0 8px;
  background: #fff;
  border: 1px solid #999;
  border-radius: 4px;
  white-space: nowrap;
}
.push { margin-left: auto; }
.after { margin-top: 5px; }
.sets { margin-top: 15px; }
.combo.sets-combo { width: 116px; }
.actions { display: flex; justify-content: flex-end; align-items: center; gap: 6px; padding: 15px 10px 10px; }
.btn.ok { width: 80px; height: 29px; border: 2px solid #159add; }
.cancel { width: 77px; }

/* call-out frames */
.mark { position: absolute; border: 3px solid #98cb00; pointer-events: none; }
.m-layers { left: 10px; top: 38px; width: 48px; height: 45px; }
.m-place { left: 136px; top: 290px; width: 160px; height: 35px; }
.m-names { left: 136px; top: 370px; width: 164px; height: 35px; }
.m-docu { left: 135px; top: 703px; width: 157px; height: 38px; }
.m-ok { left: 345px; top: 861px; width: 98px; height: 45px; }
```
